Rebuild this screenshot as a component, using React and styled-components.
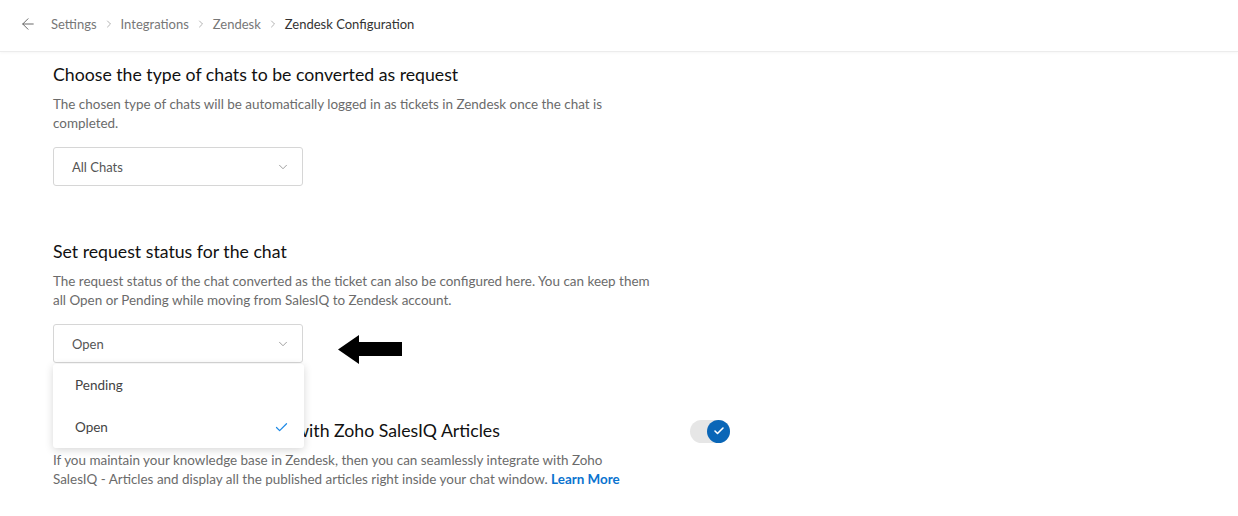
import React, { useState } from 'react';
import styled, { createGlobalStyle } from 'styled-components';
import { ArrowLeft, ChevronRight, ChevronDown, Check } from 'lucide-react';

const GlobalStyle = createGlobalStyle`
    body {
        margin: 0;
        background: #fff;
        font-family: Lato, "Liberation Sans", sans-serif;
        color: #222;
    }
`;

const crumbs = ['Settings', 'Integrations', 'Zendesk', 'Zendesk Configuration'];

function Select({ value, open, options }) {
    return (
        <SelectWrap>
            <SelectBox>
                <SelectValue>{value}</SelectValue>
                <ChevronDown size={14} strokeWidth={1.4} color="#8a8a8a" />
            </SelectBox>
            {open && (
                <Menu>
                    {options.map((opt) => (
                        <MenuItem key={opt}>
                            {opt}
                            {opt === value && <Check size={15} strokeWidth={2} color="#1f8ae6" />}
                        </MenuItem>
                    ))}
                </Menu>
            )}
        </SelectWrap>
    );
}

function PointerArrow() {
    return (
        <ArrowMark width="66" height="30" viewBox="0 0 66 30">
            <polygon points="0,14.5 21,0 21,7 64,7 64,21 21,21 21,29" fill="#000" />
        </ArrowMark>
    );
}

export default function App() {
    const [articles, setArticles] = useState(true);

    return (
        <React.Fragment>
            <GlobalStyle />
            <Header>
                <BackButton>
                    <ArrowLeft size={18} strokeWidth={1.3} color="#666" />
                </BackButton>
                <Breadcrumb>
                    {crumbs.map((c, i) => (
                        <React.Fragment key={c}>
                            {i > 0 && <ChevronRight size={12} strokeWidth={1.5} color="#999" />}
                            <Crumb current={i === crumbs.length - 1}>{c}</Crumb>
                        </React.Fragment>
                    ))}
                </Breadcrumb>
            </Header>

            <Content>
                <Section>
                    <Title>Choose the type of chats to be converted as request</Title>
                    <Description>
                        The chosen type of chats will be automatically logged in as tickets in Zendesk once the chat is completed.
                    </Description>
                    <Select value="All Chats" />
                </Section>

                <Section>
                    <Title>Set request status for the chat</Title>
                    <Description>
                        The request status of the chat converted as the ticket can also be configured here. You can keep them all Open or Pending while moving from SalesIQ to Zendesk account.
                    </Description>
                    <SelectRow>
                        <Select value="Open" open options={['Pending', 'Open']} />
                        <PointerArrow />
                    </SelectRow>
                </Section>

                <Section>
                    <TitleRow>
                        <Title>Integrate Zendesk Help Center with Zoho SalesIQ Articles</Title>
                        <Toggle on={articles} onClick={() => setArticles(!articles)}>
                            <Knob>
                                <Check size={12} strokeWidth={3.2} color="#fff" />
                            </Knob>
                        </Toggle>
                    </TitleRow>
                    <Description maxWidth={588}>
                        If you maintain your knowledge base in Zendesk, then you can seamlessly integrate with Zoho SalesIQ - Articles and display all the published articles right inside your chat window. <LearnMore href="#">Learn More</LearnMore>
                    </Description>
                </Section>
            </Content>
        </React.Fragment>
    );
}

const Header = styled.header`
    height: 52px;
    box-sizing: border-box;
    display: flex;
    align-items: center;
    padding: 0 0 4px 19px;
    border-bottom: 1px solid #ececec;
    box-shadow: 0 1px 3px rgba(0, 0, 0, 0.04);
`;

const BackButton = styled.span`
    display: flex;
    align-items: center;
    margin-right: 14px;
`;

const Breadcrumb = styled.nav`
    display: flex;
    align-items: center;
    gap: 6px;
    font-size: 13px;
`;

const Crumb = styled.span`
    color: ${(props) => (props.current ? '#333' : '#777')};
`;

const Content = styled.main`
    padding: 11px 0 0 53px;
    display: flex;
    flex-direction: column;
    gap: 54px;
`;

const Section = styled.section`
    width: 677px;
`;

const TitleRow = styled.div`
    display: flex;
    align-items: center;
    justify-content: space-between;
`;

const Title = styled.h2`
    margin: 0;
    font-size: 17.7px;
    line-height: 24px;
    font-weight: 400;
    color: #111;
`;

const Description = styled.p`
    margin: 8px 0 15px;
    max-width: ${(props) => props.maxWidth || 604}px;
    font-size: 13.45px;
    line-height: 18.5px;
    color: #6b6b6b;
`;

const SelectRow = styled.div`
    display: flex;
    align-items: flex-start;
    gap: 35px;
`;

const SelectWrap = styled.div`
    position: relative;
    width: 250px;
`;

const SelectBox = styled.div`
    height: 39px;
    box-sizing: border-box;
    border: 1px solid #d6d6d6;
    border-radius: 3px;
    display: flex;
    align-items: center;
    justify-content: space-between;
    padding: 0 12px 0 18px;
    background: #fff;
`;

const SelectValue = styled.span`
    font-size: 13px;
    color: #555;
`;

const Menu = styled.ul`
    position: absolute;
    top: 40px;
    left: 0;
    right: -1px;
    margin: 0;
    padding: 0;
    list-style: none;
    background: #fff;
    border-radius: 3px;
    box-shadow: 0 2px 8px rgba(0, 0, 0, 0.16);
    z-index: 2;
`;

const MenuItem = styled.li`
    height: 42px;
    display: flex;
    align-items: center;
    justify-content: space-between;
    padding: 0 15px 0 22px;
    font-size: 13.5px;
    color: #444;
`;

const ArrowMark = styled.svg`
    margin-top: 11px;
    display: block;
`;

const Toggle = styled.button`
    width: 40px;
    height: 23px;
    border: none;
    padding: 0;
    border-radius: 12px;
    background: #e6e6e6;
    display: flex;
    align-items: center;
    justify-content: ${(props) => (props.on ? 'flex-end' : 'flex-start')};
    cursor: pointer;
`;

const Knob = styled.span`
    width: 23px;
    height: 23px;
    border-radius: 50%;
    background: #0a66b7;
    display: flex;
    align-items: center;
    justify-content: center;
`;

const LearnMore = styled.a`
    color: #0a73cf;
    font-weight: 700;
    text-decoration: none;
`;
